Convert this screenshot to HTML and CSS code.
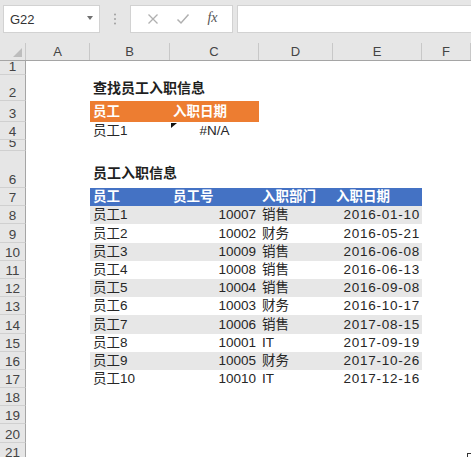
FILE: index.html
```html
<!DOCTYPE html>
<html lang="zh-CN">
<head>
    <meta charset="UTF-8">
    <meta name="viewport" content="width=device-width, initial-scale=1.0">
    <title>员工入职信息</title>
    <link rel="stylesheet" href="styles.css">
</head>
<body>
    <div class="toolbar">
        <div class="namebox">
            <span class="cellref">G22</span>
            <span class="caret"></span>
        </div>
        <div class="grip">
            <svg width="4" height="12" viewBox="0 0 4 12"><circle cx="2" cy="1.5" r="1" fill="#a0a0a0"/><circle cx="2" cy="6" r="1" fill="#a0a0a0"/><circle cx="2" cy="10.5" r="1" fill="#a0a0a0"/></svg>
        </div>
        <div class="fnbtns">
            <svg class="btn" width="12" height="12" viewBox="0 0 12 12"><path d="M1.5 1.5 L10.5 10.5 M10.5 1.5 L1.5 10.5" stroke="#b0b0b0" stroke-width="1.3" fill="none"/></svg>
            <svg class="btn" width="14" height="12" viewBox="0 0 14 12"><path d="M1.5 6.5 L5 10 L12.5 1.5" stroke="#b0b0b0" stroke-width="1.5" fill="none"/></svg>
            <span class="fx">fx</span>
        </div>
        <div class="formula"></div>
    </div>

    <div class="sheet">
        <div class="row colhdr">
            <div class="corner"><span class="tri"></span></div>
            <div class="ch">A</div>
            <div class="ch">B</div>
            <div class="ch">C</div>
            <div class="ch">D</div>
            <div class="ch">E</div>
            <div class="ch">F</div>
        </div>

        <div class="row h1"><div class="rh">1</div></div>
        <div class="row h2">
            <div class="rh">2</div><div class="c"></div>
            <div class="c title">查找员工入职信息</div>
        </div>
        <div class="row h3">
            <div class="rh">3</div><div class="c"></div>
            <div class="c orange">员工</div>
            <div class="c orange">入职日期</div>
        </div>
        <div class="row h4">
            <div class="rh">4</div><div class="c"></div>
            <div class="c">员工1</div>
            <div class="c center err"><span class="flag"></span>#N/A</div>
        </div>
        <div class="row h5"><div class="rh">5</div></div>
        <div class="row h6">
            <div class="rh">6</div><div class="c"></div>
            <div class="c title">员工入职信息</div>
        </div>
        <div class="row hd">
            <div class="rh">7</div><div class="c"></div>
            <div class="c blue">员工</div>
            <div class="c blue">员工号</div>
            <div class="c blue">入职部门</div>
            <div class="c blue">入职日期</div>
        </div>
        <div class="row hd gray">
            <div class="rh">8</div><div class="c"></div>
            <div class="c">员工1</div><div class="c num">10007</div><div class="c">销售</div><div class="c num date">2016-01-10</div>
        </div>
        <div class="row hd">
            <div class="rh">9</div><div class="c"></div>
            <div class="c">员工2</div><div class="c num">10002</div><div class="c">财务</div><div class="c num date">2016-05-21</div>
        </div>
        <div class="row hd gray">
            <div class="rh">10</div><div class="c"></div>
            <div class="c">员工3</div><div class="c num">10009</div><div class="c">销售</div><div class="c num date">2016-06-08</div>
        </div>
        <div class="row hd">
            <div class="rh">11</div><div class="c"></div>
            <div class="c">员工4</div><div class="c num">10008</div><div class="c">销售</div><div class="c num date">2016-06-13</div>
        </div>
        <div class="row hd gray">
            <div class="rh">12</div><div class="c"></div>
            <div class="c">员工5</div><div class="c num">10004</div><div class="c">销售</div><div class="c num date">2016-09-08</div>
        </div>
        <div class="row hd">
            <div class="rh">13</div><div class="c"></div>
            <div class="c">员工6</div><div class="c num">10003</div><div class="c">财务</div><div class="c num date">2016-10-17</div>
        </div>
        <div class="row hd gray">
            <div class="rh">14</div><div class="c"></div>
            <div class="c">员工7</div><div class="c num">10006</div><div class="c">销售</div><div class="c num date">2017-08-15</div>
        </div>
        <div class="row hd">
            <div class="rh">15</div><div class="c"></div>
            <div class="c">员工8</div><div class="c num">10001</div><div class="c">IT</div><div class="c num date">2017-09-19</div>
        </div>
        <div class="row hd gray">
            <div class="rh">16</div><div class="c"></div>
            <div class="c">员工9</div><div class="c num">10005</div><div class="c">财务</div><div class="c num date">2017-10-26</div>
        </div>
        <div class="row hd">
            <div class="rh">17</div><div class="c"></div>
            <div class="c">员工10</div><div class="c num">10010</div><div class="c">IT</div><div class="c num date">2017-12-16</div>
        </div>
        <div class="row hd"><div class="rh">18</div></div>
        <div class="row hd"><div class="rh">19</div></div>
        <div class="row hd"><div class="rh">20</div></div>
        <div class="row hd"><div class="rh">21</div></div>
    </div>
    <div class="cursor"></div>
</body>
</html>
```

FILE: styles.css
```css
body {
    margin: 0;
    width: 471px;
    height: 457px;
    overflow: hidden;
    background: #ffffff;
    font-family: "Liberation Sans", "Noto Sans CJK SC", sans-serif;
    color: #262626;
    position: relative;
}
.toolbar {
    display: flex;
    align-items: flex-start;
    height: 43px;
    box-sizing: border-box;
    padding: 5px 0 0 3px;
    background: #e6e6e6;
}
.namebox {
    width: 97px;
    height: 28px;
    box-sizing: border-box;
    border: 1px solid #d2d2d2;
    background: #fff;
    display: flex;
    align-items: center;
    justify-content: space-between;
    padding: 0 6px 0 6px;
}
.cellref {
    font-size: 13px;
    color: #333;
}
.caret {
    width: 0;
    height: 0;
    border-left: 3.5px solid transparent;
    border-right: 3.5px solid transparent;
    border-top: 4px solid #707070;
    margin-top: -3px;
}
.grip {
    width: 30px;
    height: 28px;
    display: flex;
    align-items: center;
    justify-content: center;
}
.fnbtns {
    width: 103px;
    height: 28px;
    box-sizing: border-box;
    border: 1px solid #d2d2d2;
    background: #fff;
    display: flex;
    align-items: center;
    justify-content: space-around;
    padding: 0 6px 0 8px;
}
.fx {
    font-family: "Liberation Serif", serif;
    font-style: italic;
    font-size: 14px;
    color: #555;
    margin-bottom: 2px;
}
.formula {
    flex: 1;
    height: 28px;
    margin-left: 4px;
    box-sizing: border-box;
    border: 1px solid #d2d2d2;
    border-right: none;
    background: #fff;
}

.row {
    display: grid;
    grid-template-columns: 26px 64px 80px 89px 74px 89px 1fr;
}
.colhdr {
    height: 18px;
    box-sizing: border-box;
    background: #e6e6e6;
    border-bottom: 1px solid #a5a5a5;
}
.corner {
    border-right: 1px solid #c8c8c8;
    display: flex;
    justify-content: flex-end;
    align-items: flex-end;
    padding: 0 3px 3px 0;
}
.tri {
    width: 0;
    height: 0;
    border-left: 9px solid transparent;
    border-bottom: 9px solid #bdbdbd;
}
.ch {
    border-right: 1px solid #c8c8c8;
    text-align: center;
    font-size: 13px;
    line-height: 17px;
    color: #444;
}
.h1 { height: 14px; }
.h2 { height: 26px; }
.h3 { height: 21px; }
.h4 { height: 18px; }
.h5 { height: 11px; }
.h6 { height: 37px; }
.hd { height: 18.2px; }

.rh {
    background: #e6e6e6;
    border-right: 1px solid #a5a5a5;
    border-bottom: 1px solid #d0d0d0;
    box-sizing: border-box;
    display: flex;
    justify-content: center;
    align-items: flex-end;
    font-size: 13.5px;
    line-height: 14px;
    color: #444;
    overflow: hidden;
}
.c {
    display: flex;
    align-items: flex-end;
    padding: 0 3px 1px 3px;
    font-size: 13.5px;
    line-height: 16px;
    white-space: nowrap;
    overflow: visible;
    position: relative;
    min-width: 0;
}
.title {
    font-weight: bold;
    font-size: 14px;
    padding-bottom: 5px;
    color: #1f1f1f;
}
.h6 .title {
    padding-bottom: 7px;
}
.orange {
    background: #ed7d31;
    color: #fff;
    font-weight: bold;
    padding-bottom: 2px;
}
.blue {
    background: #4472c4;
    color: #fff;
    font-weight: bold;
}
.gray .c:nth-child(n+3):nth-child(-n+6) {
    background: #e7e7e7;
}
.num {
    justify-content: flex-end;
}
.date {
    letter-spacing: 0.75px;
    padding-right: 2px;
}
.center {
    justify-content: center;
}
.flag {
    position: absolute;
    left: 1px;
    top: 1px;
    width: 0;
    height: 0;
    border-top: 5px solid #111;
    border-right: 6px solid transparent;
}
.cursor {
    position: absolute;
    left: 467px;
    top: 453px;
    width: 8px;
    height: 8px;
    border-top: 1px solid #333;
    border-left: 1px solid #333;
    background: #fff;
}
```
